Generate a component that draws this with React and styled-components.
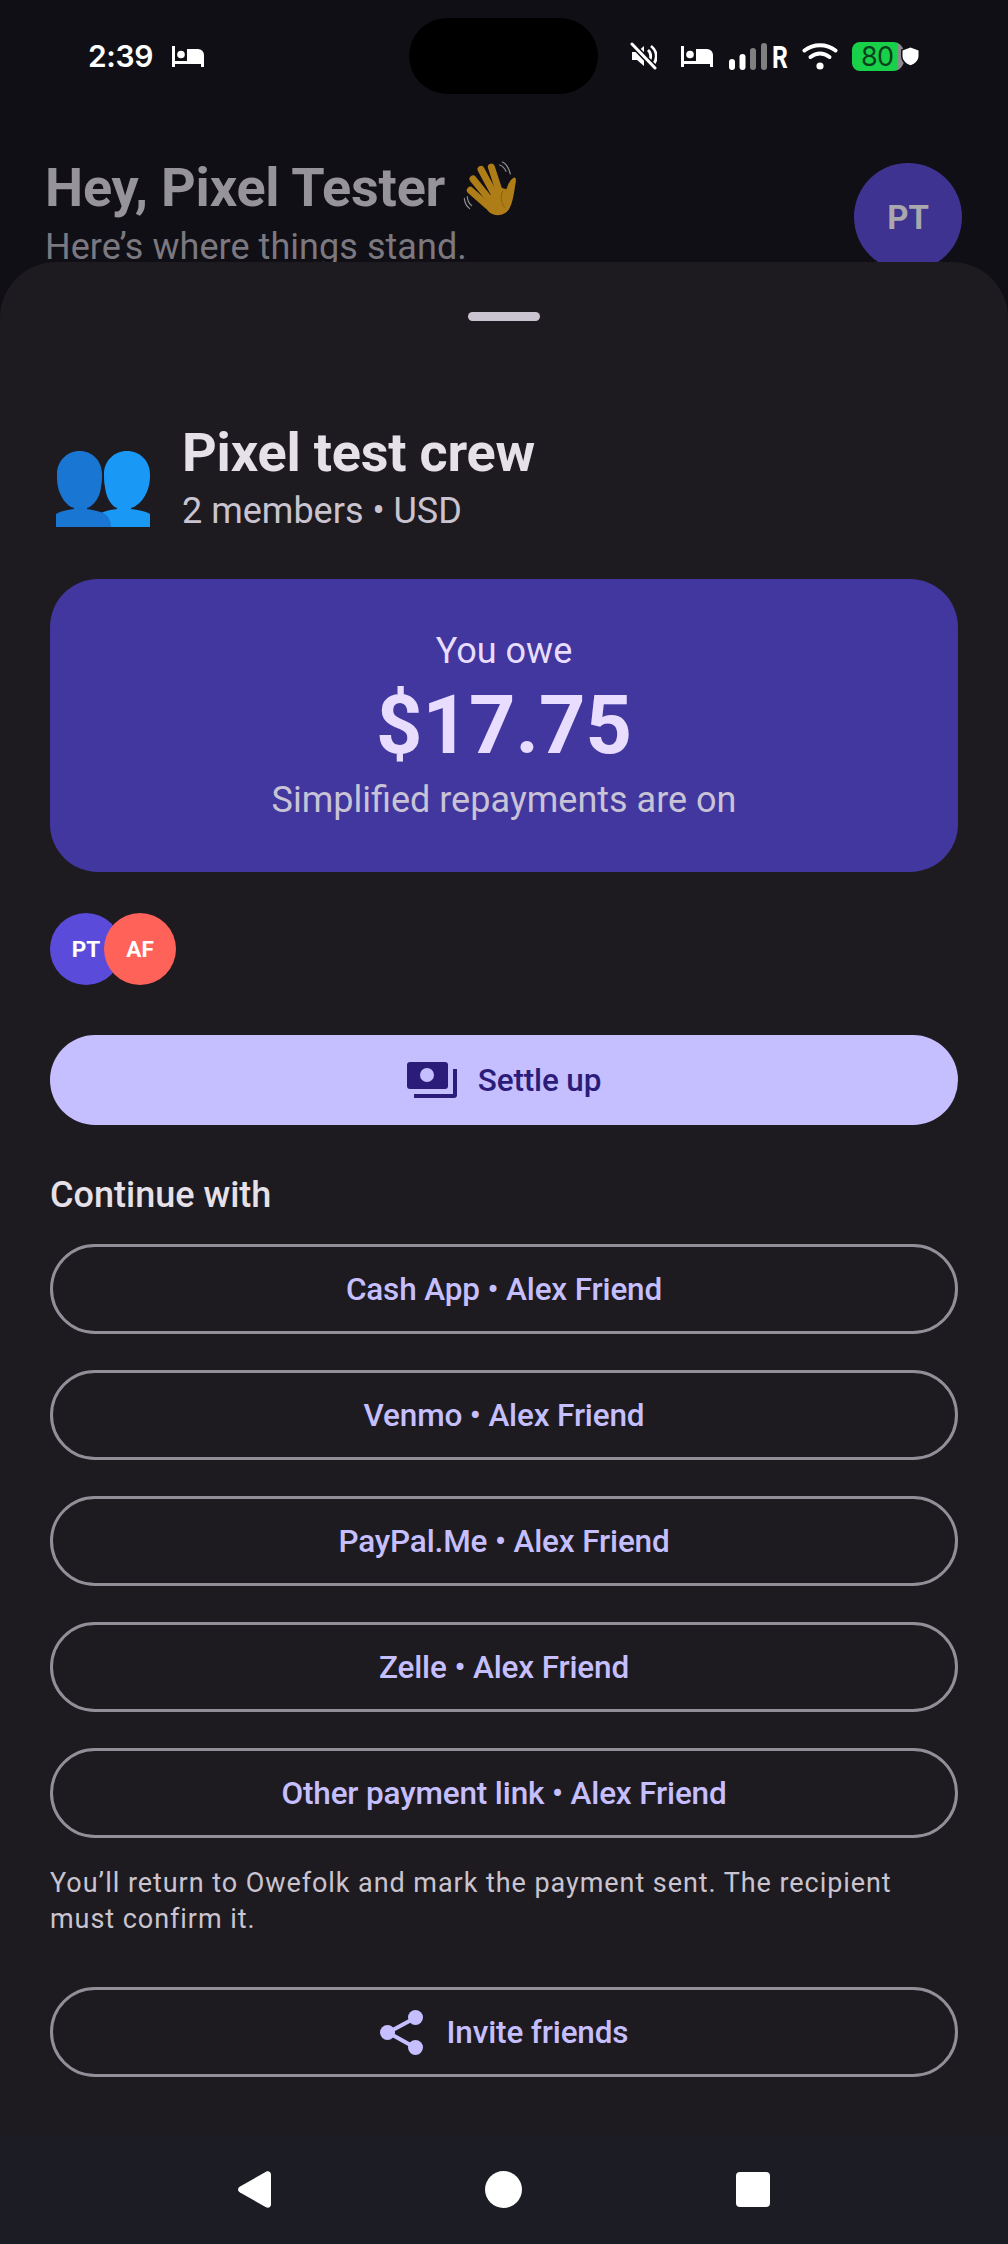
import React from "react";
import styled, { createGlobalStyle } from "styled-components";

const Global = createGlobalStyle`
  html, body { margin: 0; padding: 0; background: #111016; }
  body { font-family: Roboto, "Noto Sans", sans-serif; }
  * { box-sizing: border-box; }
`;

const Screen = styled.div`
  width: 1008px;
  height: 2244px;
  overflow: hidden;
  position: relative;
  background: #100f15;
  display: flex;
  flex-direction: column;
`;

const StatusBar = styled.div`
  height: 108px;
  flex: none;
  display: flex;
  align-items: flex-start;
  justify-content: space-between;
  padding: 38px 88px 0 88px;
  color: #fff;
`;

const StatusLeft = styled.div`
  display: flex;
  align-items: center;
  gap: 19px;
  height: 36px;
`;

const Clock = styled.span`
  font-family: Inter, Roboto, sans-serif;
  font-size: 30px;
  line-height: 36px;
  font-weight: 600;
  letter-spacing: -0.4px;
`;

const Camera = styled.div`
  position: absolute;
  left: 409px;
  top: 18px;
  width: 189px;
  height: 76px;
  border-radius: 38px;
  background: #000;
`;

const StatusRight = styled.div`
  display: flex;
  align-items: center;
  height: 36px;
`;

const Battery = styled.div`
  width: 52px;
  height: 29px;
  flex: none;
  border-radius: 8px 11px 11px 8px;
  background: linear-gradient(90deg, #19d04b 0 86%, #8b8b8d 86% 100%);
  color: #0b3f1b;
  font-family: Inter, Roboto, sans-serif;
  font-size: 27px;
  line-height: 29px;
  padding-left: 9px;
  letter-spacing: -0.6px;
`;

const Header = styled.div`
  height: 154px;
  flex: none;
  display: flex;
  justify-content: space-between;
  padding: 46px 46px 0 45px;
  overflow: hidden;
`;

const Greeting = styled.div`
  display: flex;
  flex-direction: column;
`;

const Hello = styled.div`
  font-size: 54px;
  line-height: 68px;
  font-weight: 700;
  letter-spacing: -0.2px;
  color: #96939a;
  white-space: nowrap;
  display: flex;
  align-items: center;
`;

const Sub = styled.div`
  font-size: 36px;
  line-height: 48px;
  margin-top: 1px;
  letter-spacing: 0.05px;
  color: #7b7880;
  white-space: nowrap;
`;

const HeaderAvatar = styled.div`
  width: 108px;
  height: 108px;
  border-radius: 50%;
  margin-top: 9px;
  background: #3e3391;
  color: #a9a8ac;
  font-size: 33px;
  font-weight: 700;
  display: flex;
  align-items: center;
  justify-content: center;
  flex: none;
`;

const Sheet = styled.div`
  flex: 1;
  display: flex;
  flex-direction: column;
  background: #1d1b20;
  border-radius: 56px 56px 0 0;
  padding: 0 50px;
`;

const Handle = styled.div`
  width: 72px;
  height: 9px;
  border-radius: 5px;
  background: #cac4d0;
  align-self: center;
  margin-top: 50px;
  flex: none;
`;

const GroupRow = styled.div`
  display: flex;
  align-items: flex-end;
  gap: 32px;
  margin-top: 99px;
  padding-left: 6px;
  flex: none;
`;

const GroupText = styled.div`
  display: flex;
  flex-direction: column;
`;

const GroupTitle = styled.div`
  font-size: 54px;
  line-height: 66px;
  font-weight: 700;
  letter-spacing: -0.2px;
  color: #e6e0e9;
`;

const GroupMeta = styled.div`
  font-size: 36px;
  line-height: 48px;
  margin-top: 1px;
  color: #cac4d0;
`;

const Hero = styled.div`
  margin-top: 44px;
  height: 293px;
  flex: none;
  border-radius: 48px;
  background: #41379e;
  display: flex;
  flex-direction: column;
  align-items: center;
  padding-top: 48px;
`;

const HeroLabel = styled.div`
  font-size: 36px;
  line-height: 48px;
  color: #e9ddff;
`;

const HeroAmount = styled.div`
  font-size: 81px;
  line-height: 88px;
  margin-top: 7px;
  font-weight: 700;
  color: #e9ddff;
`;

const HeroNote = styled.div`
  font-size: 36px;
  line-height: 48px;
  color: #c9c3d6;
  margin-top: 6px;
`;

const Members = styled.div`
  display: flex;
  margin-top: 41px;
  height: 72px;
  flex: none;
`;

const MemberDot = styled.div`
  width: 72px;
  height: 72px;
  border-radius: 50%;
  background: ${(p) => p.$bg};
  margin-left: ${(p) => (p.$overlap ? "-18px" : "0")};
  color: #fff;
  font-size: 22.5px;
  font-weight: 700;
  display: flex;
  align-items: center;
  justify-content: center;
`;

const Primary = styled.div`
  margin-top: 50px;
  height: 90px;
  flex: none;
  border-radius: 45px;
  background: #c6bfff;
  color: #2b1c7a;
  font-size: 31.5px;
  font-weight: 500;
  letter-spacing: -0.15px;
  display: flex;
  align-items: center;
  justify-content: center;
  gap: 21px;
`;

const SectionTitle = styled.div`
  margin-top: 46px;
  font-size: 36px;
  line-height: 48px;
  font-weight: 500;
  color: #e6e0e9;
`;

const OutlineList = styled.div`
  margin-top: 25px;
  display: flex;
  flex-direction: column;
  gap: 36px;
`;

const Outline = styled.div`
  height: 90px;
  flex: none;
  border-radius: 45px;
  border: 3px solid #938f99;
  color: #c6bfff;
  font-size: 31.5px;
  font-weight: 500;
  letter-spacing: -0.15px;
  display: flex;
  align-items: center;
  justify-content: center;
  gap: 24px;
`;

const Note = styled.div`
  margin-top: 27px;
  font-size: 27px;
  line-height: 36px;
  letter-spacing: 0.94px;
  color: #cac4d0;
`;

const InviteWrap = styled.div`
  margin-top: 50px;
  display: flex;
  flex-direction: column;
`;

const NavBar = styled.div`
  position: absolute;
  left: 0;
  right: 0;
  bottom: 0;
  height: 108px;
  background: #1b1c24;
  display: flex;
  align-items: flex-start;
  justify-content: center;
  gap: 214px;
  padding-top: 35px;
`;

const Bed = () => (
  <svg width="32" height="21" viewBox="0 0 32 21" fill="#fff" style={{ flex: "none" }}>
    <rect x="0" y="0" width="3" height="21" />
    <rect x="0" y="15" width="32" height="3" />
    <rect x="29" y="12" width="3" height="9" />
    <circle cx="9" cy="8.500" r="3.800" />
    <path d="M15 3h11a6 6 0 0 1 6 6v6H15z" />
  </svg>
);

const Muted = () => (
  <svg width="27" height="28" viewBox="0 0 27 28" fill="none" style={{ flex: "none", marginRight: 24 }}>
    <path d="M2 10h5l7-6v20l-7-6H2z" fill="#fff" />
    <path d="M18 8a8 8 0 0 1 0 12M21 4a13 13 0 0 1 2 19" stroke="#fff" strokeWidth="2.800" />
    <path d="M1 1l25 26" stroke="#100f15" strokeWidth="6" />
    <path d="M2 2l23 24" stroke="#fff" strokeWidth="3" strokeLinecap="round" />
  </svg>
);

const Signal = () => (
  <svg width="38" height="27" viewBox="0 0 38 27" style={{ flex: "none", marginLeft: 16 }}>
    <rect x="0" y="16" width="6" height="11" rx="3" fill="#fff" />
    <rect x="10.500" y="11" width="6" height="16" rx="3" fill="#fff" />
    <rect x="21" y="5" width="6" height="22" rx="3" fill="#808080" />
    <rect x="32" y="0" width="6" height="27" rx="3" fill="#808080" />
  </svg>
);

const RGlyph = styled.span`
  display: block;
  flex: none;
  width: 16px;
  margin: 4px 14px 0 5px;
  font-family: Roboto, sans-serif;
  font-size: 31px;
  font-weight: 700;
  line-height: 28px;
  transform: scaleX(0.8);
  transform-origin: left;
`;

const Wifi = () => (
  <svg width="36" height="27" viewBox="0 0 36 27" fill="none" style={{ flex: "none", marginRight: 14 }}>
    <path d="M2.500 7.500c9-7 22-7 31 0" stroke="#fff" strokeWidth="4" strokeLinecap="round" />
    <path d="M8.500 14c6-4.500 13-4.500 19 0" stroke="#fff" strokeWidth="4" strokeLinecap="round" />
    <circle cx="18" cy="23" r="3.600" fill="#fff" />
  </svg>
);

const Shield = () => (
  <svg width="19" height="21" viewBox="0 0 19 21" style={{ flex: "none", marginLeft: -3 }}>
    <path d="M9.500 0L19 3.500v6.500c0 5-4 9-9.500 11C4 19 0 15 0 10V3.500z" fill="#100f15" />
    <path d="M9.500 1.500l8 3v5.500c0 4.200-3.300 7.500-8 9.300-4.700-1.800-8-5.100-8-9.300V4.500z" fill="#fff" />
  </svg>
);

const Wave = () => (
  <svg width="75" height="75" viewBox="0 0 225 225" fill="none" style={{ display: "block", flex: "none", margin: "-5px 0 -5px 8px" }}>
    <path d="M85 150L145 110l15 5c5-15 12-30 22-35 8-2 8 10 5 20-4 25-7 55-19 75-13 20-43 25-63 5z" fill="#ae7d18" />
    <g stroke="#ae7d18" strokeWidth="21" strokeLinecap="round">
      <path d="M52 118l52 46" />
      <path d="M60 84l52 64" />
      <path d="M84 55l42 78" />
      <path d="M115 48l26 80" />
    </g>
    <path d="M150 120c-10 15-5 35 5 50" stroke="#8a6110" strokeWidth="3" />
    <g stroke="#8f8f94" strokeWidth="3.500" strokeLinecap="round">
      <path d="M34 142c1 12 6 23 16 31" />
      <path d="M43 137c0 10 5 20 13 27" />
      <path d="M140 42c9 3 15 10 19 19" />
      <path d="M148 33c10 4 18 13 24 36" />
    </g>
  </svg>
);

const People = () => (
  <svg width="94" height="76" viewBox="0 0 94 76" style={{ display: "block", flex: "none", marginBottom: 8 }}>
    <path d="M71 0c13 0 23 10 23 23 0 3 0 7-1 11-2 11-10 21-18 23v1c7 1 14 2 19 5v13H40V65c3-3 12-6 21-7v-1c-6-2-11-11-12-21-1-4-1-9-1-13C48 10 58 0 71 0z" fill="#1a98f5" />
    <path d="M23.500 0c13 0 22.500 10 22.500 23 0 4 0 9-1 13-1 10-7 19-14 21v1c6 1 12 2 16 4 6 3 8 8 8 14H0V63c5-3 11-4 18-5v-1C10 55 4 45 2 36c-1-4-1-9-1-13C1 10 11 0 23.500 0z" fill="#1976d2" />
  </svg>
);

const Cash = () => (
  <svg width="50" height="36" viewBox="0 0 50 36" style={{ display: "block", flex: "none" }}>
    <path d="M3 0h35a3 3 0 0 1 3 3v21a3 3 0 0 1-3 3H3a3 3 0 0 1-3-3V3a3 3 0 0 1 3-3z" fill="#2b1c7a" />
    <circle cx="20" cy="13" r="7" fill="#c6bfff" />
    <path d="M46 7h4v26a3 3 0 0 1-3 3H7v-4h39z" fill="#2b1c7a" />
  </svg>
);

const Share = () => (
  <svg width="43" height="45" viewBox="0 0 43 45" fill="none" style={{ display: "block", flex: "none" }}>
    <path d="M35 8L8 22.500l27 15" stroke="#c6bfff" strokeWidth="4" />
    <circle cx="35.500" cy="7.500" r="7.500" fill="#c6bfff" />
    <circle cx="7.500" cy="22.500" r="7.500" fill="#c6bfff" />
    <circle cx="35.500" cy="37.500" r="7.500" fill="#c6bfff" />
  </svg>
);

const methods = ["Cash App", "Venmo", "PayPal.Me", "Zelle", "Other payment link"];

export default function App() {
  return (
    <Screen>
      <Global />
      <StatusBar>
        <StatusLeft>
          <Clock>2:39</Clock>
          <Bed />
        </StatusLeft>
        <StatusRight>
          <Muted />
          <Bed />
          <Signal />
          <RGlyph>R</RGlyph>
          <Wifi />
          <Battery>80</Battery>
          <Shield />
        </StatusRight>
      </StatusBar>
      <Camera />
      <Header>
        <Greeting>
          <Hello>
            Hey, Pixel Tester
            <Wave />
          </Hello>
          <Sub>Here’s where things stand.</Sub>
        </Greeting>
        <HeaderAvatar>PT</HeaderAvatar>
      </Header>
      <Sheet>
        <Handle />
        <GroupRow>
          <People />
          <GroupText>
            <GroupTitle>Pixel test crew</GroupTitle>
            <GroupMeta>2 members • USD</GroupMeta>
          </GroupText>
        </GroupRow>
        <Hero>
          <HeroLabel>You owe</HeroLabel>
          <HeroAmount>$17.75</HeroAmount>
          <HeroNote>Simplified repayments are on</HeroNote>
        </Hero>
        <Members>
          <MemberDot $bg="#5b4bdb">PT</MemberDot>
          <MemberDot $bg="#ff6259" $overlap>AF</MemberDot>
        </Members>
        <Primary>
          <Cash />
          Settle up
        </Primary>
        <SectionTitle>Continue with</SectionTitle>
        <OutlineList>
          {methods.map((m) => (
            <Outline key={m}>{m} • Alex Friend</Outline>
          ))}
        </OutlineList>
        <Note>You’ll return to Owefolk and mark the payment sent. The recipient must confirm it.</Note>
        <InviteWrap>
          <Outline>
            <Share />
            Invite friends
          </Outline>
        </InviteWrap>
      </Sheet>
      <NavBar>
        <svg width="33" height="37" viewBox="0 0 33 37">
          <path d="M28 .8c2.500-1.300 5 .2 5 3v29.400c0 2.800-2.500 4.300-5 3L2 21.500c-2.600-1.500-2.600-4.500 0-6z" fill="#fff" />
        </svg>
        <svg width="37" height="37" viewBox="0 0 37 37">
          <circle cx="18.500" cy="18.500" r="18.500" fill="#fff" />
        </svg>
        <svg width="34" height="35" viewBox="0 0 34 35" style={{ marginTop: 1 }}>
          <rect x="0" y="0" width="34" height="35" rx="4" fill="#fff" />
        </svg>
      </NavBar>
    </Screen>
  );
}
